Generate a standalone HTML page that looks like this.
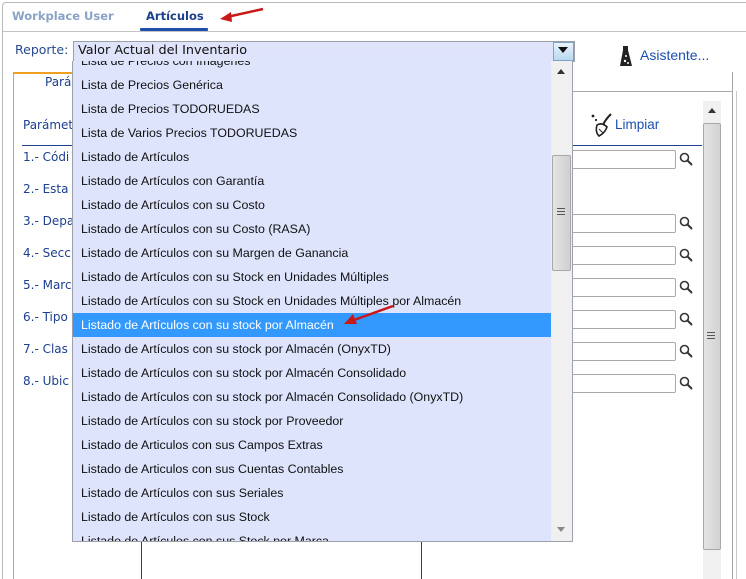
<!DOCTYPE html>
<html><head><meta charset="utf-8"><style>
*{box-sizing:border-box;margin:0;padding:0}
html,body{width:746px;height:579px;overflow:hidden}
body{background:#fff;font-family:"DejaVu Sans",sans-serif;}
#w{position:relative;width:746px;height:579px;overflow:hidden}
.a{position:absolute}
.lbl{font-size:12px;color:#1d3f8f;white-space:nowrap}
.it{position:absolute;left:8px;font-family:"Liberation Sans",sans-serif;font-size:12.4px;color:#111;white-space:nowrap;height:24px;line-height:24px}
.inp{position:absolute;left:572px;width:104px;height:19px;border:1px solid #a8a8a8;border-left:none;border-radius:0 2px 2px 0;background:#fff}
.mag{position:absolute;left:679px;width:14px;height:14px}
</style></head><body><div id="w">
<div class="a" style="left:2px;top:2px;width:744px;height:577px;border:1px solid #b8b8b8;border-right:none;border-bottom:none;border-radius:4px 0 0 0"></div>
<div class="a" style="left:3px;top:31px;width:743px;height:1px;background:#c4c4c4"></div>
<div class="a" style="left:12px;top:9px;font-size:11.5px;font-weight:bold;color:#8aa2c6">Workplace User</div>
<div class="a" style="left:146px;top:9px;font-size:11.5px;font-weight:bold;color:#1d3f8f">Artículos</div>
<div class="a" style="left:140px;top:28px;width:68px;height:3px;background:#1f4fa8;border-radius:1px"></div>
<svg class="a" style="left:215px;top:4px" width="55" height="22"><line x1="48" y1="5" x2="12" y2="13" stroke="#c81818" stroke-width="2.5"/><polygon points="5,15 16,8 17,18" fill="#c81818"/></svg>
<div class="a lbl" style="left:15px;top:42px;color:#2a4a8e;font-size:12.5px">Reporte:</div>
<div class="a" style="left:73px;top:41px;width:502px;height:21px;background:#dfe4fb;border:1px solid #9ca0a8"></div>
<div class="a" style="left:78px;top:43px;font-size:12.8px;color:#111">Valor Actual del Inventario</div>
<div class="a" style="left:553px;top:42px;width:21px;height:19px;border:1px solid #7da2c8;background:linear-gradient(#e8f3fc,#b8d8f0)"></div>
<svg class="a" style="left:558px;top:47px" width="11" height="7"><polygon points="0,0 10,0 5,6" fill="#111"/></svg>
<svg class="a" style="left:619px;top:46px" width="14" height="21"><polygon points="4,0 9,0 9,4 13,20 1,20 4,4" fill="#222"/><circle cx="7" cy="10" r="1" fill="#fff"/><circle cx="6" cy="15" r="1.2" fill="#fff"/><circle cx="9" cy="17" r="1" fill="#fff"/></svg>
<div class="a" style="left:640px;top:47px;font-size:14px;color:#1d4fb0;font-family:'Liberation Sans',sans-serif">Asistente...</div>
<div class="a" style="left:13px;top:72px;width:720px;height:507px;border:1px solid #a8a8a8;border-top:none;border-bottom:none"></div>
<div class="a" style="left:13px;top:72px;width:70px;height:2px;background:#f0a020;border-radius:3px 0 0 0"></div>
<div class="a" style="left:573px;top:91px;width:160px;height:1px;background:#a8a8a8"></div>
<div class="a" style="left:736px;top:91px;width:1px;height:488px;background:#c8c8c8"></div>
<div class="a lbl" style="left:45px;top:75px">Pará</div>
<div class="a lbl" style="left:23px;top:118px">Parámet</div>
<div class="a" style="left:22px;top:145px;width:680px;height:1px;background:#1f3f8f"></div>
<div class="a lbl" style="left:23px;top:150px">1.- Códi</div>
<div class="a lbl" style="left:23px;top:182px">2.- Esta</div>
<div class="a lbl" style="left:23px;top:214px">3.- Depa</div>
<div class="a lbl" style="left:23px;top:246px">4.- Secc</div>
<div class="a lbl" style="left:23px;top:278px">5.- Marc</div>
<div class="a lbl" style="left:23px;top:310px">6.- Tipo</div>
<div class="a lbl" style="left:23px;top:342px">7.- Clas</div>
<div class="a lbl" style="left:23px;top:374px">8.- Ubic</div>
<div class="a" style="left:141px;top:540px;width:1px;height:39px;background:#1f3f8f"></div>
<div class="a" style="left:421px;top:540px;width:1px;height:39px;background:#1f3f8f"></div>
<svg class="a" style="left:590px;top:112px" width="24" height="26"><circle cx="3" cy="4" r="1.4" fill="#222"/><circle cx="6" cy="8" r="1.1" fill="#222"/><path d="M21 2 Q15 8 13 13" fill="none" stroke="#222" stroke-width="2"/><path d="M7 13 Q12 10 17 15 Q15 21 9 24 Q5 20 7 13 Z" fill="none" stroke="#222" stroke-width="1.6"/><line x1="9" y1="17" x2="13" y2="21" stroke="#222"/></svg>
<div class="a" style="left:615px;top:117px;font-size:13.5px;color:#1d4fb0;font-family:'Liberation Sans',sans-serif">Limpiar</div>
<div class="a" style="left:703px;top:101px;width:18px;height:478px;background:#f0f0f0"></div>
<svg class="a" style="left:708px;top:108px" width="9" height="6"><polygon points="0,5 8,5 4,0" fill="#333"/></svg>
<div class="a" style="left:703px;top:123px;width:18px;height:427px;border:1px solid #a8a8a8;border-radius:2px;background:linear-gradient(90deg,#e4e4e4,#d2d2d2)"></div>
<div class="a" style="left:707px;top:332px;width:8px;height:7px;border-top:1px solid #555;border-bottom:1px solid #555"></div>
<div class="a" style="left:707px;top:335px;width:8px;height:1px;background:#555"></div>
<div class="inp" style="top:150px"></div>
<div class="inp" style="top:214px"></div>
<div class="inp" style="top:246px"></div>
<div class="inp" style="top:278px"></div>
<div class="inp" style="top:310px"></div>
<div class="inp" style="top:342px"></div>
<div class="inp" style="top:374px"></div>
<svg class="a" width="0" height="0"><defs><g id="m"><circle cx="5.5" cy="5.5" r="4" fill="none" stroke="#333" stroke-width="1.6"/><line x1="8.5" y1="8.5" x2="13" y2="13" stroke="#333" stroke-width="2"/></g></defs></svg>
<svg class="mag" style="top:152px"><use href="#m"/></svg>
<svg class="mag" style="top:216px"><use href="#m"/></svg>
<svg class="mag" style="top:248px"><use href="#m"/></svg>
<svg class="mag" style="top:280px"><use href="#m"/></svg>
<svg class="mag" style="top:312px"><use href="#m"/></svg>
<svg class="mag" style="top:344px"><use href="#m"/></svg>
<svg class="mag" style="top:376px"><use href="#m"/></svg>
<div class="a" style="left:72px;top:61px;width:501px;height:481px;background:#dfe4fd;border:1px solid #9ca0a8;border-top:none;overflow:hidden">
 <div class="a" style="left:0;top:252px;width:478px;height:24px;background:#3399ff"></div>
 <div class="it" style="top:-12px">Lista de Precios con Imágenes</div>
 <div class="it" style="top:12px">Lista de Precios Genérica</div>
 <div class="it" style="top:36px">Lista de Precios TODORUEDAS</div>
 <div class="it" style="top:60px">Lista de Varios Precios TODORUEDAS</div>
 <div class="it" style="top:84px">Listado de Artículos</div>
 <div class="it" style="top:108px">Listado de Artículos con Garantía</div>
 <div class="it" style="top:132px">Listado de Artículos con su Costo</div>
 <div class="it" style="top:156px">Listado de Artículos con su Costo (RASA)</div>
 <div class="it" style="top:180px">Listado de Artículos con su Margen de Ganancia</div>
 <div class="it" style="top:204px">Listado de Artículos con su Stock en Unidades Múltiples</div>
 <div class="it" style="top:228px">Listado de Artículos con su Stock en Unidades Múltiples por Almacén</div>
 <div class="it" style="top:252px;color:#fff">Listado de Artículos con su stock por Almacén</div>
 <div class="it" style="top:276px">Listado de Artículos con su stock por Almacén (OnyxTD)</div>
 <div class="it" style="top:300px">Listado de Artículos con su stock por Almacén Consolidado</div>
 <div class="it" style="top:324px">Listado de Artículos con su stock por Almacén Consolidado (OnyxTD)</div>
 <div class="it" style="top:348px">Listado de Artículos con su stock por Proveedor</div>
 <div class="it" style="top:372px">Listado de Articulos con sus Campos Extras</div>
 <div class="it" style="top:396px">Listado de Articulos con sus Cuentas Contables</div>
 <div class="it" style="top:420px">Listado de Artículos con sus Seriales</div>
 <div class="it" style="top:444px">Listado de Artículos con sus Stock</div>
 <div class="it" style="top:468px">Listado de Artículos con sus Stock por Marca</div>
 <div class="a" style="left:478px;top:0;width:21px;height:480px;background:#f0f0f0"></div>
 <svg class="a" style="left:484px;top:8px" width="9" height="6"><polygon points="0,5 8,5 4,0" fill="#333"/></svg>
 <svg class="a" style="left:484px;top:466px" width="9" height="6"><polygon points="0,0 8,0 4,5" fill="#888"/></svg>
 <div class="a" style="left:479px;top:94px;width:19px;height:116px;border:1px solid #a8a8a8;border-radius:2px;background:linear-gradient(90deg,#e4e4e4,#d0d0d0)"></div>
 <div class="a" style="left:484px;top:147px;width:8px;height:7px;border-top:1px solid #555;border-bottom:1px solid #555"></div>
 <div class="a" style="left:484px;top:150px;width:8px;height:1px;background:#555"></div>
</div>
<svg class="a" style="left:338px;top:300px" width="60" height="32"><line x1="55" y1="6" x2="16" y2="20" stroke="#c81818" stroke-width="2.5"/><polygon points="6,24 15,14 19,24" fill="#c81818"/></svg>
</div></body></html>
